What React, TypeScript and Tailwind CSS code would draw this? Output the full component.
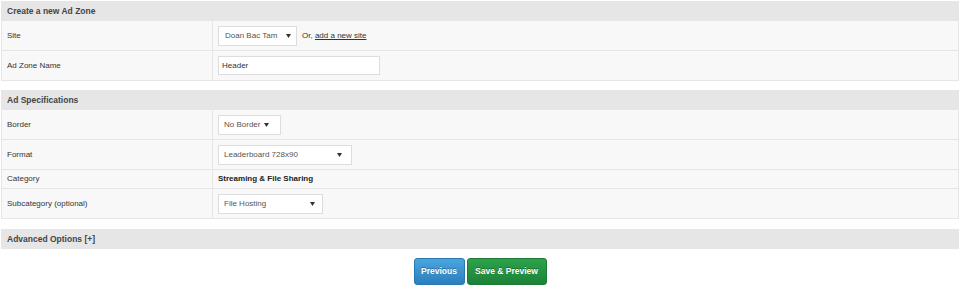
import type { ReactNode } from 'react'

function Arrow() {
  return (
    <svg width="5" height="4" viewBox="0 0 5 4" className="ml-auto shrink-0">
      <polygon points="0,0 5,0 2.5,4" fill="#333" />
    </svg>
  )
}

function FakeSelect({ value, width, padLeft, padRight }: { value: string; width: string; padLeft: string; padRight: string }) {
  return (
    <div className={`flex h-[20px] items-center border border-[#dddddd] bg-white text-[8px] text-[#555] ${width} ${padLeft} ${padRight}`}>
      <span className="whitespace-nowrap">{value}</span>
      <Arrow />
    </div>
  )
}

function SectionHeader({ title }: { title: string }) {
  return (
    <div className="flex h-[18px] items-center bg-[#e6e6e6] pl-[5px] text-[8.5px] font-bold text-[#444]">
      {title}
    </div>
  )
}

function Row({ label, short, children }: { label: string; short?: boolean; children: ReactNode }) {
  return (
    <div className="flex border-t border-[#e6e6e6] bg-[#f8f8f8]">
      <div className={`flex w-[210px] shrink-0 items-center pl-[5px] text-[8px] text-[#333] ${short ? 'h-[18px]' : 'h-[29px]'}`}>
        {label}
      </div>
      <div className="flex flex-1 items-center border-l border-[#e6e6e6] pl-[5px]">{children}</div>
    </div>
  )
}

export default function App() {
  return (
    <div className="min-h-[292px] bg-white pt-px font-['Liberation_Sans',Arial,sans-serif]">
      <div className="mx-px border border-[#e6e6e6]">
        <SectionHeader title="Create a new Ad Zone" />
        <Row label="Site">
          <FakeSelect value="Doan Bac Tam" width="w-[79px]" padLeft="pl-[6px]" padRight="pr-[5px]" />
          <span className="ml-[5px] text-[8px] text-[#333]">
            Or, <a href="#" className="underline">add a new site</a>
          </span>
        </Row>
        <Row label="Ad Zone Name">
          <input
            defaultValue="Header"
            className="h-[19px] w-[162px] border border-[#dddddd] bg-white pl-[3px] text-[8px] text-[#333] outline-none"
          />
        </Row>
      </div>

      <div className="mx-px mt-[9px] border border-[#e6e6e6]">
        <SectionHeader title="Ad Specifications" />
        <Row label="Border">
          <FakeSelect value="No Border" width="w-[63px]" padLeft="pl-[5px]" padRight="pr-[11px]" />
        </Row>
        <Row label="Format">
          <FakeSelect value="Leaderboard 728x90" width="w-[134px]" padLeft="pl-[5px]" padRight="pr-[9px]" />
        </Row>
        <Row label="Category" short>
          <span className="text-[8px] font-bold text-[#222]">Streaming &amp; File Sharing</span>
        </Row>
        <Row label="Subcategory (optional)">
          <FakeSelect value="File Hosting" width="w-[105px]" padLeft="pl-[5px]" padRight="pr-[7px]" />
        </Row>
      </div>

      <div className="mx-px mt-[10px] border border-[#e6e6e6]">
        <SectionHeader title="Advanced Options [+]" />
      </div>

      <div className="mt-[9px] flex justify-center gap-[2px]">
        <button className="h-[27px] w-[51px] rounded-[3px] border border-[#2a78b2] bg-gradient-to-b from-[#4aa5de] to-[#2a7fbd] text-[8.5px] font-bold text-white [text-shadow:0_-1px_0_rgba(0,0,0,0.3)]">
          Previous
        </button>
        <button className="h-[27px] w-[80px] rounded-[3px] border border-[#1b7a34] bg-gradient-to-b from-[#2da24c] to-[#1c8238] text-[8.5px] font-bold text-white [text-shadow:0_-1px_0_rgba(0,0,0,0.3)]">
          Save &amp; Preview
        </button>
      </div>
    </div>
  )
}
